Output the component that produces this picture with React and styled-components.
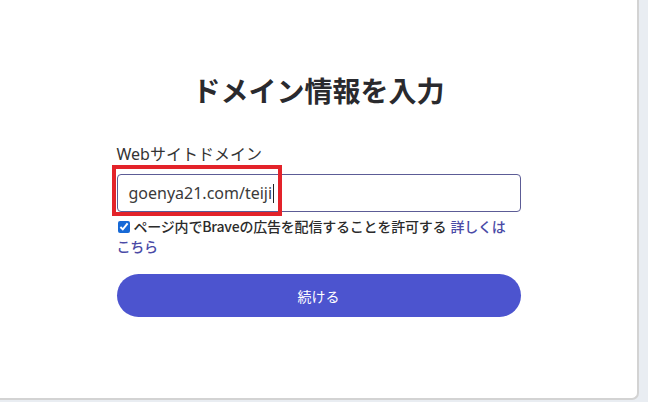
import styled, { createGlobalStyle } from "styled-components";

const GlobalStyle = createGlobalStyle`
  html, body {
    margin: 0;
    padding: 0;
    background: #e9edf2;
  }
  body {
    font-family: "Noto Sans", "Noto Sans CJK JP", sans-serif;
    color: #2b2b2b;
  }
`;

const Page = styled.div`
  width: 648px;
  height: 402px;
  overflow: hidden;
`;

const Card = styled.div`
  width: 637px;
  height: 325px;
  padding-top: 73px;
  background: #ffffff;
  border-right: 2px solid #d3d3d3;
  border-bottom: 2px solid #d3d3d3;
  border-bottom-right-radius: 7px;
  display: flex;
  justify-content: center;
`;

const Form = styled.div`
  width: 404px;
  display: flex;
  flex-direction: column;
`;

const Title = styled.h1`
  margin: 0 0 37px;
  text-align: center;
  font-family: "Noto Sans CJK JP", sans-serif;
  font-size: 28px;
  font-weight: 700;
  line-height: 34px;
  color: #2a2a2e;
`;

const Label = styled.label`
  font-family: "Noto Sans", "Noto Sans CJK JP", sans-serif;
  font-size: 16px;
  line-height: 20px;
  color: #333;
  margin-bottom: 10px;
`;

const Field = styled.div`
  position: relative;
`;

const TextInput = styled.div`
  height: 36px;
  border: 1px solid #5c5c96;
  border-radius: 4px;
  padding: 0 11px;
  display: flex;
  align-items: center;
  font-family: "Noto Sans", sans-serif;
  font-size: 16px;
  color: #3a3a3a;
`;

const Caret = styled.span`
  display: inline-block;
  width: 1px;
  height: 19px;
  background: #222;
  margin-left: 1px;
`;

const Highlight = styled.div`
  position: absolute;
  left: -5px;
  top: -9px;
  width: 162px;
  height: 43px;
  border: 4px solid #e3232a;
  pointer-events: none;
`;

const Consent = styled.div`
  margin-top: 4px;
  font-family: "Noto Sans CJK JP", sans-serif;
  font-size: 14px;
  font-weight: 500;
  line-height: 20px;
  letter-spacing: -0.2px;
  color: #2b2b2b;
`;

const Check = styled.input`
  width: 12px;
  height: 12px;
  margin: 0 4px 0 1px;
  vertical-align: -1px;
  accent-color: #1769d6;
`;

const Link = styled.a`
  color: #4a4aa6;
  text-decoration: none;
  margin-left: 4px;
`;

const NoBreak = styled.span`
  white-space: nowrap;
`;

const Button = styled.button`
  margin-top: 18px;
  height: 43px;
  border: none;
  border-radius: 22px;
  background: #4c54cf;
  color: #ffffff;
  font-family: "Noto Sans CJK JP", sans-serif;
  font-size: 14px;
  cursor: pointer;
`;

export default function App() {
  return (
    <>
      <GlobalStyle />
      <Page>
        <Card>
          <Form>
            <Title>ドメイン情報を入力</Title>
            <Label>Webサイトドメイン</Label>
            <Field>
              <TextInput>
                goenya21.com/teiji
                <Caret />
              </TextInput>
              <Highlight />
            </Field>
            <Consent>
              <Check type="checkbox" checked readOnly />
              ページ内でBraveの広告を配信することを許可する
              <Link href="#">
                詳しくは<NoBreak>こちら</NoBreak>
              </Link>
            </Consent>
            <Button>続ける</Button>
          </Form>
        </Card>
      </Page>
    </>
  );
}
